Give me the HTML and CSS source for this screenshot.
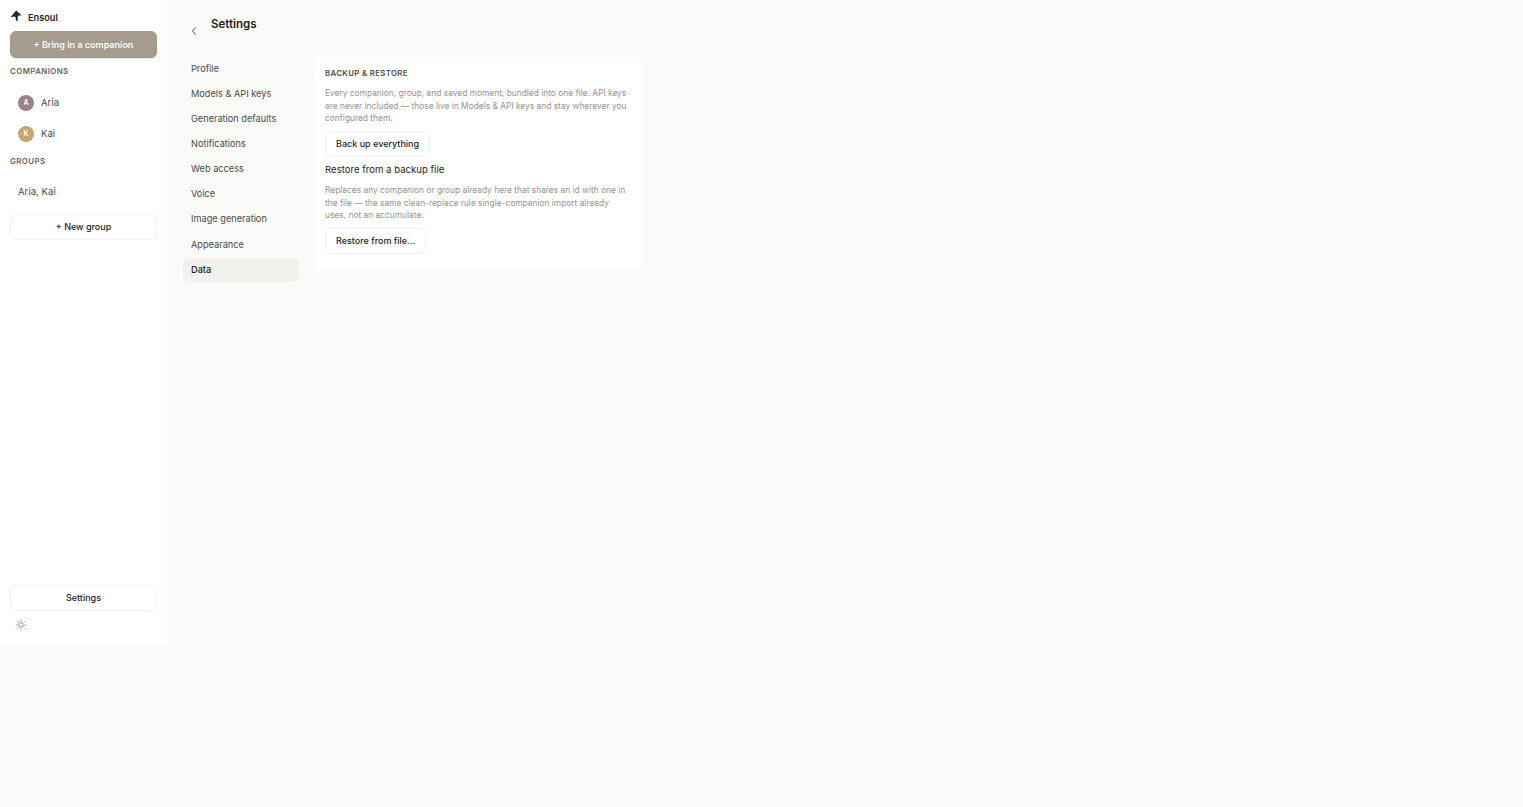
FILE: index.html
```html
<!DOCTYPE html>
<html lang="en">
<head>
    <meta charset="UTF-8">
    <meta name="viewport" content="width=device-width, initial-scale=1.0">
    <title>Settings</title>
    <link rel="stylesheet" href="styles.css">
</head>
<body>
    <div class="app">
        <aside class="sidebar">
            <div class="brand">
                <svg class="brand-icon" viewBox="0 0 12 12" width="12" height="12"><path d="M6.2 .6 L11.8 5.6 L8.6 5.6 L7.8 7 L7.6 10.8 L6 10.8 L5.6 7.4 L4.6 6.4 L.4 7.2 Z" fill="#2b2a28"/></svg>
                <span>Ensoul</span>
            </div>
            <button class="primary-btn">+ Bring in a companion</button>
            <div class="section-label label-companions">COMPANIONS</div>
            <div class="row"><span class="avatar aria">A</span>Aria</div>
            <div class="row"><span class="avatar kai">K</span>Kai</div>
            <div class="section-label label-groups">GROUPS</div>
            <div class="row group-row">Aria, Kai</div>
            <button class="ghost-btn new-group">+ New group</button>
            <div class="sidebar-foot">
                <button class="ghost-btn">Settings</button>
                <svg class="sun" viewBox="0 0 12 12" width="12" height="12" fill="none" stroke="#77756f" stroke-width="0.8"><circle cx="6" cy="6" r="2.2"/><path d="M6 .8v1.6M6 9.6v1.6M.8 6h1.6M9.6 6h1.6M2.3 2.3l1.2 1.2M8.5 8.5l1.2 1.2M2.3 9.7l1.2-1.2M8.5 3.5l1.2-1.2"/></svg>
            </div>
        </aside>
        <main class="content">
            <header class="page-head">
                <svg class="back" viewBox="0 0 8 10" width="8" height="10" fill="none" stroke="#55534e" stroke-width="1"><path d="M5.5 1.5 L2.5 5 L5.5 8.5"/></svg>
                <h1>Settings</h1>
            </header>
            <div class="columns">
                <nav class="settings-nav">
                    <a>Profile</a>
                    <a>Models &amp; API keys</a>
                    <a>Generation defaults</a>
                    <a>Notifications</a>
                    <a>Web access</a>
                    <a>Voice</a>
                    <a>Image generation</a>
                    <a>Appearance</a>
                    <a class="active">Data</a>
                </nav>
                <section class="card">
                    <h2>BACKUP &amp; RESTORE</h2>
                    <p>Every companion, group, and saved moment, bundled into one file. API keys are never included — those live in Models &amp; API keys and stay wherever you configured them.</p>
                    <button class="ghost-btn card-btn">Back up everything</button>
                    <h3>Restore from a backup file</h3>
                    <p>Replaces any companion or group already here that shares an id with one in the file — the same clean-replace rule single-companion import already uses, not an accumulate.</p>
                    <button class="ghost-btn card-btn">Restore from file...</button>
                </section>
            </div>
        </main>
    </div>
</body>
</html>
```

FILE: styles.css
```css
body {
    margin: 0;
    background: #fafaf8;
    font-family: Inter, "Liberation Sans", sans-serif;
    color: #2b2a28;
}
.app {
    display: flex;
    height: 646px;
}
button {
    font-family: inherit;
    cursor: pointer;
}
.sidebar {
    width: 167px;
    box-sizing: border-box;
    padding: 0 10px 0;
    background: #ffffff;
    display: flex;
    flex-direction: column;
    flex-shrink: 0;
}
.brand {
    height: 31px;
    display: flex;
    align-items: center;
    gap: 6px;
    padding: 3px 0 0 0;
    box-sizing: border-box;
    font-size: 9.2px;
    font-weight: 600;
    color: #1f1e1c;
}
.brand-icon {
    margin-top: -2px;
}
.primary-btn {
    height: 27px;
    border: 1px solid #a39a8e;
    border-radius: 6px;
    background: #a59c8f;
    color: #fbfaf8;
    font-size: 9px;
    font-weight: 600;
    box-shadow: 0 1px 2px rgba(0, 0, 0, 0.12);
}
.section-label {
    font-size: 7.8px;
    font-weight: 600;
    letter-spacing: 0.45px;
    line-height: 10px;
    color: #66635d;
}
.label-companions {
    margin-top: 8px;
    margin-bottom: 11px;
}
.label-groups {
    margin-top: 7px;
    margin-bottom: 10px;
}
.row {
    height: 31px;
    display: flex;
    align-items: center;
    gap: 7px;
    padding-left: 8px;
    font-size: 9.6px;
    color: #4d4b46;
}
.avatar {
    width: 16px;
    height: 16px;
    border-radius: 50%;
    display: flex;
    align-items: center;
    justify-content: center;
    font-size: 7px;
    font-weight: 600;
    color: #fff;
}
.aria {
    background: #9a8385;
}
.kai {
    background: #c4a672;
}
.group-row {
    height: 29px;
    box-sizing: border-box;
    padding-top: 2px;
}
.ghost-btn {
    height: 26px;
    border: 1px solid #f3f2ef;
    border-radius: 6px;
    background: #ffffff;
    color: #1f1e1c;
    font-size: 9px;
    font-weight: 500;
    padding: 0 0 1px;
}
.new-group {
    margin-top: 9px;
}
.sidebar-foot {
    margin-top: auto;
    padding-bottom: 15px;
    display: flex;
    flex-direction: column;
}
.sun {
    margin: 8px 0 0 5px;
}
.content {
    flex: 1;
    padding: 0 16px;
}
.page-head {
    height: 57px;
    display: flex;
    align-items: flex-start;
}
.back {
    margin-top: 26px;
    margin-left: 7px;
}
.page-head h1 {
    margin: 16px 0 0 13px;
    font-size: 11.5px;
    font-weight: 600;
    line-height: 16px;
    color: #1f1e1c;
}
.columns {
    display: flex;
    align-items: flex-start;
    gap: 16px;
}
.settings-nav {
    width: 116px;
    display: flex;
    flex-direction: column;
    gap: 1.08px;
}
.settings-nav a {
    height: 24px;
    line-height: 24.8px;
    padding-left: 8px;
    font-size: 9.2px;
    color: #4d4b46;
    border-radius: 6px;
}
.settings-nav a.active {
    background: #f2f1ee;
    color: #1f1e1c;
    font-weight: 500;
}
.card {
    width: 327px;
    box-sizing: border-box;
    height: 212.5px;
    padding: 10px;
    background: #ffffff;
    border-radius: 6px;
}
.card h2 {
    margin: 0;
    font-size: 7.8px;
    font-weight: 600;
    letter-spacing: 0.35px;
    line-height: 12px;
    color: #4d4b46;
}
.card h3 {
    margin: 6.5px 0 0;
    font-size: 9.6px;
    font-weight: 400;
    line-height: 14px;
    color: #1f1e1c;
}
.card p {
    margin: 8px 0 0;
    font-size: 8.4px;
    line-height: 12.5px;
    color: #96948e;
}
.card h3 + p {
    margin-top: 7px;
}
.card-btn {
    display: block;
    margin-top: 6px;
    padding: 0 10px 1px;
}
.card h3 + p + .card-btn {
    margin-top: 6.5px;
}
```
